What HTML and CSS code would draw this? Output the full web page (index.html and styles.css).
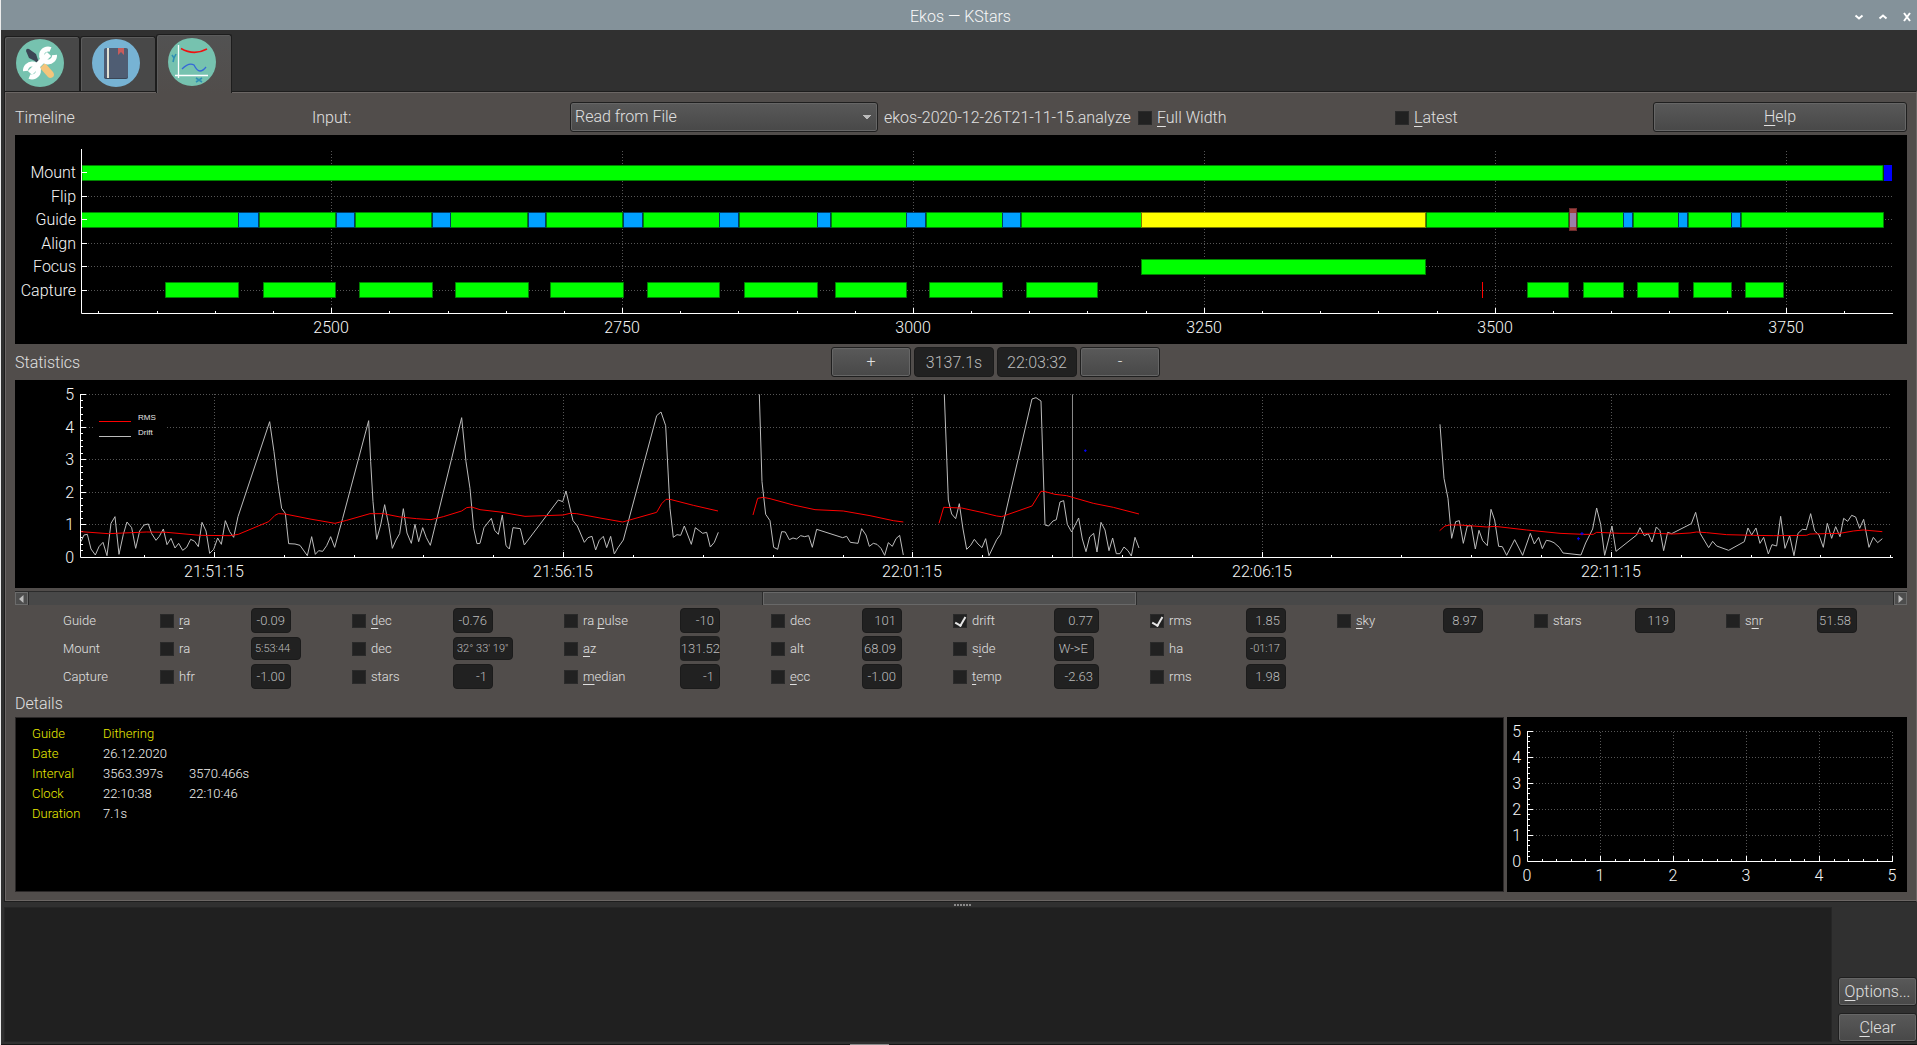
FILE: index.html
```html
<!DOCTYPE html>
<html lang="en">
<head>
<meta charset="utf-8">
<title>Ekos — KStars</title>
<link rel="stylesheet" href="styles.css">
</head>
<body>
<header class="titlebar">
  <h1 class="title">Ekos — KStars</h1>
  <div class="window-buttons">
    <button type="button" aria-label="Minimize"><svg width="12" height="12" viewBox="0 0 12 12"><path d="M2.500 4.500L6 7.500L9.500 4.500"/></svg></button>
    <button type="button" aria-label="Maximize"><svg width="12" height="12" viewBox="0 0 12 12"><path d="M2.500 7.500L6 4.500L9.500 7.500"/></svg></button>
    <button type="button" aria-label="Close"><svg width="12" height="12" viewBox="0 0 12 12"><path d="M3 2L9 10M9 2L3 10"/></svg></button>
  </div>
</header>

<nav class="tabs">
  <button type="button" class="tab" aria-label="Setup">
    <svg width="48" height="48" viewBox="0 0 48 48">
      <circle cx="24" cy="24" r="24" fill="#76c2af"/>
      <path d="M10 12Q10 9 13 10L20 15L22 21L25 24L23 26L19 22L13 19Z" fill="#3b4554"/>
      <path d="M24 29L29 24L37 33Q39 36 37 38Q34 40 32 38Z" fill="#f5c57b"/>
      <path d="M14 34L33 15" stroke="#fff" stroke-width="6"/>
      <path d="M34.500 10.500A6.500 6.500 0 1 0 38.500 16" fill="none" stroke="#fff" stroke-width="5"/>
      <path d="M13.500 37.500A6.500 6.500 0 1 0 9.500 32" fill="none" stroke="#fff" stroke-width="5"/>
    </svg>
  </button>
  <button type="button" class="tab" aria-label="Scheduler">
    <svg width="48" height="48" viewBox="0 0 48 48">
      <circle cx="24" cy="24" r="24" fill="#77b3d4"/>
      <rect x="12" y="10" width="24" height="30" rx="2" fill="#3b4656"/>
      <rect x="12" y="9" width="24" height="30" rx="2" fill="#4f5d73"/>
      <rect x="15" y="9" width="2" height="30" fill="#e0e0d1"/>
      <path d="M26 9H32V16L29 13L26 16Z" fill="#c75c5c"/>
    </svg>
  </button>
  <button type="button" class="tab tab-active" aria-label="Analyze">
    <svg width="48" height="48" viewBox="0 0 48 48">
      <circle cx="24" cy="24" r="24" fill="#76c2af"/>
      <path d="M10.500 7V40M7 37.500H40" stroke="#fff" stroke-width="1.300" fill="none"/>
      <path d="M13 10.500Q26 18 39 11" stroke="#f01010" stroke-width="1.500" fill="none"/>
      <path d="M14 31Q21 24 26 27Q29 33 32 33Q35 33 38 29" stroke="#3568d8" stroke-width="1.300" fill="none"/>
      <path d="M4 17L6 20L8 16M6 20L5 24M28 40L34 44M34 40L28 44" stroke="#2f8fb4" stroke-width="1.600" fill="none"/>
    </svg>
  </button>
</nav>

<main class="panel">
  <div class="controls">
    <h2>Timeline</h2>
    <label for="input">Input:</label>
    <select id="input"><option>Read from File</option></select>
    <span>ekos-2020-12-26T21-11-15.analyze</span>
    <label class="check"><input type="checkbox"><span><u>F</u>ull Width</span></label>
    <label class="check"><input type="checkbox"><span><u>L</u>atest</span></label>
    <button type="button" class="push"><u>H</u>elp</button>
  </div>

  <svg class="chart" viewBox="15 135 1892 209" role="img" aria-label="Timeline">
    <g class="grid">
      <path d="M331.500 151V313M622.500 151V313M913.500 151V313M1204.500 151V313M1495.500 151V313M1786.500 151V313"/>
      <path d="M88 196.500H1892M88 219.500H1892M88 243.500H1892M88 266.500H1892M88 290.500H1892"/>
    </g>
    <g class="done">
      <rect x="82" y="165.500" width="1801" height="15"/>
      <path d="M82 212.500H238.500V227.500H82M259.500 212.500H335.500V227.500H259.500ZM355.500 212.500H431.500V227.500H355.500ZM450.500 212.500H527.500V227.500H450.500ZM546.500 212.500H622.500V227.500H546.500ZM643.500 212.500H719.500V227.500H643.500ZM739.500 212.500H817.500V227.500H739.500ZM831.500 212.500H906.500V227.500H831.500ZM926.500 212.500H1002.500V227.500H926.500ZM1021.500 212.500H1141.500V227.500H1021.500ZM1426.500 212.500H1568.500V227.500H1426.500ZM1577.500 212.500H1623.500V227.500H1577.500ZM1633.500 212.500H1678.500V227.500H1633.500ZM1688.500 212.500H1731.500V227.500H1688.500ZM1741.500 212.500H1883.500V227.500H1741.500Z"/>
      <rect x="1141.500" y="259.500" width="284" height="15"/>
      <path d="M165.500 282.500H238.500V297.500H165.500ZM263.500 282.500H335.500V297.500H263.500ZM359.500 282.500H432.500V297.500H359.500ZM455.500 282.500H528.500V297.500H455.500ZM550.500 282.500H623.500V297.500H550.500ZM647.500 282.500H719.500V297.500H647.500ZM744.500 282.500H817.500V297.500H744.500ZM835.500 282.500H906.500V297.500H835.500ZM929.500 282.500H1002.500V297.500H929.500ZM1026.500 282.500H1097.500V297.500H1026.500ZM1527.500 282.500H1568.500V297.500H1527.500ZM1583.500 282.500H1623.500V297.500H1583.500ZM1637.500 282.500H1678.500V297.500H1637.500ZM1693.500 282.500H1731.500V297.500H1693.500ZM1745.500 282.500H1783.500V297.500H1745.500Z"/>
    </g>
    <path class="dither" d="M238.500 212.500H258.500V227.500H238.500ZM336.500 212.500H354.500V227.500H336.500ZM432.500 212.500H450.500V227.500H432.500ZM528.500 212.500H545.500V227.500H528.500ZM623.500 212.500H642.500V227.500H623.500ZM719.500 212.500H738.500V227.500H719.500ZM817.500 212.500H830.500V227.500H817.500ZM906.500 212.500H925.500V227.500H906.500ZM1002.500 212.500H1020.500V227.500H1002.500ZM1623.500 212.500H1632.500V227.500H1623.500ZM1678.500 212.500H1687.500V227.500H1678.500ZM1731.500 212.500H1740.500V227.500H1731.500Z"/>
    <rect class="suspended" x="1141.500" y="212.500" width="284" height="15"/>
    <rect class="parked" x="1884" y="165" width="8" height="16"/>
    <rect class="selected" x="1569.500" y="208.500" width="7" height="22"/>
    <rect x="1570" y="213" width="6" height="14" fill="#9b7fa8"/>
    <path d="M1482.500 282V298" stroke="#f00"/>
    <path class="axis" d="M81.500 149V313.500H1893M81 172.500H87M81 196.500H87M81 219.500H87M81 243.500H87M81 266.500H87M81 290.500H87M331.500 308V313M622.500 308V313M913.500 308V313M1204.500 308V313M1495.500 308V313M1786.500 308V313M98.500 311V313M157.500 311V313M215.500 311V313M273.500 311V313M389.500 311V313M448.500 311V313M506.500 311V313M564.500 311V313M680.500 311V313M738.500 311V313M797.500 311V313M855.500 311V313M971.500 311V313M1029.500 311V313M1087.500 311V313M1146.500 311V313M1262.500 311V313M1320.500 311V313M1378.500 311V313M1437.500 311V313M1553.500 311V313M1611.500 311V313M1669.500 311V313M1727.500 311V313M1844.500 311V313"/>
    <g class="ylabels">
      <text x="76" y="178">Mount</text><text x="76" y="202">Flip</text><text x="76" y="225">Guide</text><text x="76" y="249">Align</text><text x="76" y="272">Focus</text><text x="76" y="296">Capture</text>
    </g>
    <g class="xlabels">
      <text x="331" y="333">2500</text><text x="622" y="333">2750</text><text x="913" y="333">3000</text><text x="1204" y="333">3250</text><text x="1495" y="333">3500</text><text x="1786" y="333">3750</text>
    </g>
  </svg>

  <div class="stats-bar">
    <h2>Statistics</h2>
    <div class="zoom">
      <button type="button" class="push">+</button>
      <input type="text" aria-label="Elapsed time" value="3137.1s" readonly>
      <input type="text" aria-label="Clock time" value="22:03:32" readonly>
      <button type="button" class="push">-</button>
    </div>
  </div>

  <svg class="chart" viewBox="15 380 1892 208" role="img" aria-label="Statistics">
    <g class="grid">
      <path d="M214.500 394V557M563.500 394V557M912.500 394V557M1262.500 394V557M1611.500 394V557"/>
      <path d="M86 394.500H1891M86 427.500H1891M86 459.500H1891M86 492.500H1891M86 524.500H1891"/>
    </g>
    <path d="M95 415H165V430H95Z" fill="#000"/>
    <path d="M99 421.500H131" stroke="#f00"/>
    <path d="M99 436.500H131" stroke="#bbb"/>
    <text class="legend" x="138" y="420">RMS</text>
    <text class="legend" x="138" y="435">Drift</text>
    <path class="axis" d="M80.500 394V557.500H1893M80 394.500H86M80 427.500H86M80 459.500H86M80 492.500H86M80 524.500H86M80 400.500H83M80 407.500H83M80 414.500H83M80 420.500H83M80 433.500H83M80 440.500H83M80 446.500H83M80 453.500H83M80 466.500H83M80 472.500H83M80 479.500H83M80 485.500H83M80 498.500H83M80 505.500H83M80 511.500H83M80 518.500H83M80 531.500H83M80 537.500H83M80 544.500H83M80 550.500H83M214.500 552V557M563.500 552V557M912.500 552V557M1262.500 552V557M1611.500 552V557M144.500 555V557M284.500 555V557M354.500 555V557M423.500 555V557M493.500 555V557M633.500 555V557M703.500 555V557M773.500 555V557M843.500 555V557M982.500 555V557M1052.500 555V557M1122.500 555V557M1192.500 555V557M1331.500 555V557M1401.500 555V557M1471.500 555V557M1541.500 555V557M1681.500 555V557M1751.500 555V557M1820.500 555V557M1890.500 555V557"/>
    <g transform="translate(0 375) scale(.33333)">
      <g class="drift">
        <polyline points="243,500 252,480 262,478 273,522 286,540 297,515 309,502 321,542 333,445 345,425 357,538 370,478 381,441 395,458 407,520 419,468 432,450 445,447 455,476 468,496 478,484 490,462 501,509 513,490 525,519 536,505 548,526 560,517 572,493 584,499 595,515 606,442 618,468 629,535 641,523 653,489 664,508 676,437 689,470 701,487 714,425 809,140 822,230 833,320 845,400 856,415 866,506 885,507 900,511 922,542 935,485 946,538 956,527 968,529 980,512 992,485 1004,517 1028,430 1106,137 1112,260 1119,380 1130,493 1142,450 1154,389 1166,450 1177,520 1188,495 1199,476 1210,401 1221,474 1234,505 1245,448 1256,500 1268,458 1279,488 1291,511 1385,128 1398,260 1410,340 1421,460 1431,506 1440,505"/>
        <g transform="translate(1440)">
          <polyline points="0,505 12,458 34,430 44,466 55,478 67,420 78,512 88,522 99,458 121,461 133,510 235,375 248,380 258,348 279,437 292,453 313,502 324,488 336,484 347,525 358,496 370,484 380,518 392,484 403,537 414,518 430,495 530,122 543,111 557,152 570,400 580,487 591,479 602,481 613,453 634,508 646,458 668,475 680,472 691,516 703,502 715,472"/>
          <polyline points="838,58 846,320 857,418 870,437 881,517 893,523 905,470 916,471 928,494 939,489 950,492 962,482 974,485 986,482 997,517 1010,463 1088,488 1100,484 1111,502 1134,505 1145,461 1158,480 1168,514 1180,505 1191,508 1203,520 1214,541 1225,503 1237,514 1248,491 1259,481 1270,540"/>
        </g>
        <g transform="translate(2700)">
          <polyline points="133,58 145,375 155,417 167,431 178,386 189,462 200,523 212,511 223,493 234,507 246,518 257,491 267,542 290,494 302,478 396,72 408,68 423,78 435,450 446,453 459,438 469,434 480,381 491,377 502,448 515,471 536,429 547,492 558,530 569,486 581,475 591,531 603,442 615,465 627,527 638,489 649,536 660,536 672,516 684,527 694,543 705,487 717,519"/>
          <path d="M517.500 58V547"/>
        </g>
        <g transform="translate(4260)">
          <polyline points="60,148 72,310 84,370 95,490 107,440 118,437 130,505 142,453 154,452 166,522 177,466 188,497 202,512 213,403 224,435 236,514 247,515 260,541 284,494 308,541 331,475 343,507 356,487 367,521 379,496 390,498 402,503 418,517 429,534 483,540 497,504 518,462 530,399 542,448 554,541 576,453 588,529 650,480 660,458 673,482 685,476 696,501 709,456 720,467 731,527 743,472 755,476 814,446 827,412 841,476 866,518 878,499 890,513 926,526 973,500 984,459 995,480 1008,459 1020,505 1031,487 1045,537 1056,509 1070,513 1082,424 1095,520 1109,482 1122,542 1134,475 1147,463 1159,464 1172,416 1184,468 1197,480 1210,517 1222,445 1235,490 1247,455 1260,485 1271,430 1283,439 1295,421 1307,426 1319,460 1331,433 1347,517 1360,487 1373,503 1387,491"/>
        </g>
      </g>
      <g class="rms">
        <polyline points="243,470 325,476 440,471 500,472 600,481 690,482 715,478 806,440 825,421 835,416 855,417 930,432 1005,445 1040,436 1110,416 1150,416 1200,426 1250,431 1293,434 1330,425 1385,408 1400,398 1415,396 1440,404"/>
        <g transform="translate(1440)">
          <polyline points="0,404 60,411 135,424 250,420 270,415 290,416 360,429 428,441 530,412 545,386 558,373 570,373 640,391 714,408"/>
          <polyline points="819,420 833,370 850,367 870,371 940,390 1005,404 1090,408 1170,422 1240,437 1270,441"/>
        </g>
        <g transform="translate(2700)">
          <polyline points="117,445 131,397 185,399 240,411 290,423 305,425 396,393 423,349 432,349 465,358 500,362 580,385 640,397 717,417"/>
        </g>
        <g transform="translate(4260)">
          <polyline points="59,467 75,453 90,450 120,450 200,456 225,454 320,465 420,475 490,478 520,478 530,472 600,475 700,475 760,477 810,474 830,471 860,473 920,479 1000,481 1060,482 1160,481 1170,477 1260,475 1300,468 1330,465 1387,470"/>
        </g>
      </g>
      <path d="M3252 227H3260M3256 223V231M4741 476H4751M4746 471V481M4731 491H4740M4735 486V496" stroke="#00f" stroke-width="3"/>
    </g>
    <g class="ylabels">
      <text x="74" y="400">5</text><text x="74" y="433">4</text><text x="74" y="465">3</text><text x="74" y="498">2</text><text x="74" y="530">1</text><text x="74" y="563">0</text>
    </g>
    <g class="xlabels">
      <text x="214" y="577">21:51:15</text><text x="563" y="577">21:56:15</text><text x="912" y="577">22:01:15</text><text x="1262" y="577">22:06:15</text><text x="1611" y="577">22:11:15</text>
    </g>
  </svg>

  <div class="scrollbar">
    <button type="button" aria-label="Scroll left"><svg width="5" height="8" viewBox="0 0 5 8"><path d="M4.500 0V8L0 4Z" fill="#bbb"/></svg></button>
    <div class="track"><div class="thumb"></div></div>
    <button type="button" aria-label="Scroll right"><svg width="5" height="8" viewBox="0 0 5 8"><path d="M.5 0V8L5 4Z" fill="#bbb"/></svg></button>
  </div>

  <div class="values">
    <span class="row-name">Guide</span>
    <label class="check"><input type="checkbox"><span><u>r</u>a</span></label><input type="text" aria-label="Guide ra" value="-0.09" readonly>
    <label class="check"><input type="checkbox"><span><u>d</u>ec</span></label><input type="text" aria-label="Guide dec" value="-0.76" readonly>
    <label class="check"><input type="checkbox"><span>ra <u>p</u>ulse</span></label><input type="text" aria-label="Guide ra pulse" value="-10" readonly>
    <label class="check"><input type="checkbox"><span>dec</span></label><input type="text" aria-label="Guide dec pulse" value="101" readonly>
    <label class="check"><input type="checkbox" checked><span>drift</span></label><input type="text" class="w45" aria-label="Guide drift" value="0.77" readonly>
    <label class="check"><input type="checkbox" checked><span>rms</span></label><input type="text" aria-label="Guide rms" value="1.85" readonly>
    <label class="check"><input type="checkbox"><span><u>s</u>ky</span></label><input type="text" aria-label="Guide sky" value="8.97" readonly>
    <label class="check"><input type="checkbox"><span>stars</span></label><input type="text" aria-label="Guide stars" value="119" readonly>
    <label class="check"><input type="checkbox"><span>s<u>n</u>r</span></label><input type="text" aria-label="Guide snr" value="51.58" readonly>

    <span class="row-name">Mount</span>
    <label class="check"><input type="checkbox"><span>ra</span></label><input type="text" class="angle w50" aria-label="Mount ra" value="5:53:44" readonly>
    <label class="check"><input type="checkbox"><span>dec</span></label><input type="text" class="angle w60" aria-label="Mount dec" value="32° 33' 19&quot;" readonly>
    <label class="check"><input type="checkbox"><span><u>a</u>z</span></label><input type="text" class="tight" aria-label="Mount az" value="131.52" readonly>
    <label class="check"><input type="checkbox"><span>alt</span></label><input type="text" aria-label="Mount alt" value="68.09" readonly>
    <label class="check"><input type="checkbox"><span>s<u>i</u>de</span></label><input type="text" aria-label="Mount side" value="W-&gt;E" readonly>
    <label class="check"><input type="checkbox"><span>ha</span></label><input type="text" class="angle" aria-label="Mount ha" value="-01:17" readonly>

    <span class="row-name">Capture</span>
    <label class="check"><input type="checkbox"><span>hfr</span></label><input type="text" aria-label="Capture hfr" value="-1.00" readonly>
    <label class="check"><input type="checkbox"><span>stars</span></label><input type="text" aria-label="Capture stars" value="-1" readonly>
    <label class="check"><input type="checkbox"><span><u>m</u>edian</span></label><input type="text" aria-label="Capture median" value="-1" readonly>
    <label class="check"><input type="checkbox"><span><u>e</u>cc</span></label><input type="text" aria-label="Capture ecc" value="-1.00" readonly>
    <label class="check"><input type="checkbox"><span><u>t</u>emp</span></label><input type="text" class="w45" aria-label="Capture temp" value="-2.63" readonly>
    <label class="check"><input type="checkbox"><span>rms</span></label><input type="text" aria-label="Capture rms" value="1.98" readonly>
  </div>

  <h2 class="details-title">Details</h2>
  <div class="details">
    <div class="details-text">
      <table>
        <tr><th>Guide</th><th colspan="2">Dithering</th></tr>
        <tr><th>Date</th><td>26.12.2020</td><td></td></tr>
        <tr><th>Interval</th><td>3563.397s</td><td>3570.466s</td></tr>
        <tr><th>Clock</th><td>22:10:38</td><td>22:10:46</td></tr>
        <tr><th>Duration</th><td>7.1s</td><td></td></tr>
      </table>
    </div>
    <svg class="mini" viewBox="1507 717 400 175" role="img" aria-label="Details plot">
      <g class="grid">
        <path d="M1600.500 732V861M1673.500 732V861M1746.500 732V861M1819.500 732V861M1892.500 732V861"/>
        <path d="M1533 731.500H1892M1533 757.500H1892M1533 783.500H1892M1533 809.500H1892M1533 835.500H1892"/>
      </g>
      <path class="axis" d="M1527.500 731V861.500H1893M1527 731.500H1533M1527 757.500H1533M1527 783.500H1533M1527 809.500H1533M1527 835.500H1533M1600.500 856V861M1673.500 856V861M1746.500 856V861M1819.500 856V861M1892.500 856V861M1527 736.500H1530M1527 741.500H1530M1527 747.500H1530M1527 752.500H1530M1527 762.500H1530M1527 767.500H1530M1527 773.500H1530M1527 778.500H1530M1527 788.500H1530M1527 793.500H1530M1527 799.500H1530M1527 804.500H1530M1527 814.500H1530M1527 819.500H1530M1527 825.500H1530M1527 830.500H1530M1527 840.500H1530M1527 845.500H1530M1527 851.500H1530M1527 856.500H1530M1542.500 859V861M1556.500 859V861M1571.500 859V861M1585.500 859V861M1615.500 859V861M1629.500 859V861M1644.500 859V861M1658.500 859V861M1688.500 859V861M1702.500 859V861M1717.500 859V861M1731.500 859V861M1761.500 859V861M1775.500 859V861M1790.500 859V861M1804.500 859V861M1834.500 859V861M1848.500 859V861M1863.500 859V861M1877.500 859V861"/>
      <g class="ylabels">
        <text x="1521" y="737">5</text><text x="1521" y="763">4</text><text x="1521" y="789">3</text><text x="1521" y="815">2</text><text x="1521" y="841">1</text><text x="1521" y="867">0</text>
      </g>
      <g class="xlabels">
        <text x="1527" y="881">0</text><text x="1600" y="881">1</text><text x="1673" y="881">2</text><text x="1746" y="881">3</text><text x="1819" y="881">4</text><text x="1892" y="881">5</text>
      </g>
    </svg>
  </div>
</main>

<div class="splitter"></div>

<footer class="log">
  <textarea aria-label="Log" readonly></textarea>
  <div class="log-buttons">
    <button type="button" class="push"><u>O</u>ptions...</button>
    <button type="button" class="push"><u>C</u>lear</button>
  </div>
</footer>
<div class="dock-edge"><div class="dock-grip"></div></div>
</body>
</html>
```
FILE: styles.css
```css
* { box-sizing: border-box; }

html { height: 100%; }

body {
  margin: 0;
  min-height: 100%;
  display: flex;
  flex-direction: column;
  background: #303030;
  border-left: 1px solid #ececec;
  color: #e0e0e0;
  font: 300 16px/20px Roboto, "Liberation Sans", sans-serif;
}

button, input, select, textarea { font: inherit; color: inherit; margin: 0; }
h1, h2 { margin: 0; font: inherit; }
svg { display: block; }
u { text-underline-offset: 3px; text-decoration-thickness: 1px; }

.titlebar {
  display: grid;
  grid-template-columns: 1fr auto 1fr;
  align-items: center;
  height: 30px;
  margin-left: -1px;
  padding: 3px 4px 0 8px;
  background: #84929a;
}
.title { grid-column: 2; color: #f8f8f8; }
.window-buttons { display: flex; gap: 12px; justify-content: flex-end; }
.window-buttons button { padding: 0; border: 0; background: none; }
.window-buttons path { fill: none; stroke: #fff; stroke-width: 2; }

.tabs {
  display: flex;
  align-items: flex-end;
  padding: 4px 0 0 3px;
}
.tab {
  display: flex;
  align-items: flex-start;
  width: 76px;
  height: 55px;
  padding: 2px 0 0 11px;
  border: 1px solid #1d1d1d;
  border-bottom: 0;
  border-radius: 3px 3px 0 0;
  background: #484848;
  box-shadow: inset 1px 1px #5c5c5c;
}
.tab-active {
  position: relative;
  height: 59px;
  margin-bottom: -2px;
  padding-top: 3px;
  background: linear-gradient(#525252, #514d4b);
}

.panel {
  margin-left: 3px;
  padding: 10px 9px 9px 10px;
  background: #514d4b;
  border: 1px solid #1d1d1d;
  border-right-color: #6b6664;
  box-shadow: inset 1px 1px #6b6664, inset 0 -1px #6b6664;
}

.controls {
  display: grid;
  grid-template-columns: 297fr 258fr 314fr 254fr 257fr 258fr 254fr;
  align-items: center;
  height: 33px;
  padding-bottom: 3px;
  white-space: nowrap;
}
.controls select {
  appearance: none;
  height: 30px;
  margin-right: 6px;
  padding: 0 4px;
  border: 1px solid #1f1f1f;
  border-radius: 3px;
  background:
    linear-gradient(to bottom right, #bbb 50%, transparent 51%) right 6px center / 4px 4px no-repeat,
    linear-gradient(to bottom left, #bbb 50%, transparent 51%) right 10px center / 4px 4px no-repeat,
    linear-gradient(#595959, #484848);
  box-shadow: inset 0 0 0 1px #666;
}
.controls > *, .stats-bar > h2 { padding-top: 1px; }
.push {
  height: 30px;
  padding: 0;
  border: 1px solid #1f1f1f;
  border-radius: 3px;
  background: linear-gradient(#595959, #484848);
  box-shadow: inset 0 0 0 1px #666;
}

.check { display: flex; align-items: center; gap: 5px; }
.check input {
  appearance: none;
  flex: none;
  width: 14px;
  height: 14px;
  background: #212121;
  border: 1px solid #2a2a2a;
}
.check input:checked::before {
  content: "";
  display: block;
  width: 5px;
  height: 9px;
  margin-left: 3px;
  border: solid #e6e6e6;
  border-width: 0 2px 2px 0;
  transform: rotate(30deg);
}

.chart { width: 100%; height: auto; background: #000; }
.grid path { stroke: #565656; stroke-dasharray: 1 2; fill: none; }
.axis { stroke: #fff; fill: none; }
.done { fill: #0f0; stroke: #008500; }
.dither { fill: #00a0ff; stroke: #003a66; }
.suspended { fill: #ff0; stroke: #7a7a00; }
.parked { fill: #00f; }
.selected { fill: #a04040; stroke: #6e2c2c; }
.ylabels text { text-anchor: end; fill: #f6f6f6; }
.xlabels text { text-anchor: middle; fill: #f6f6f6; }
.legend { font: 8px "Liberation Sans", sans-serif; fill: #e6e6e6; }
.drift polyline { fill: none; stroke: #bdbdbd; stroke-width: 3; }
.drift path { stroke: #8c8c8c; stroke-width: 3; }
.rms polyline { fill: none; stroke: #f00; stroke-width: 3; }

.stats-bar {
  display: grid;
  grid-template-columns: 1fr auto 1fr;
  align-items: center;
  height: 36px;
}
.zoom { display: flex; gap: 3px; margin-left: 69px; }
.zoom .push, .zoom input { width: 80px; height: 30px; }
input[type="text"] {
  border: 1px solid #1b1b1b;
  border-radius: 4px;
  background: #212121;
  color: #bcbcbc;
}
.zoom input { text-align: center; padding: 0; }

.scrollbar {
  display: flex;
  height: 14px;
  margin-top: 3px;
  border-top: 1px solid #2b2b2b;
  background: #484848;
}
.scrollbar button {
  flex: none;
  display: grid;
  place-items: center;
  width: 13px;
  padding: 0;
  border: 1px solid #6b6b6b;
  background: #4d4d4d;
}
.track { flex: 1; border: solid #2b2b2b; border-width: 0 1px; }
.thumb {
  width: 20%;
  height: 13px;
  margin-left: 39.4%;
  border: 1px solid #686868;
  background: #505050;
  box-shadow: -1px 0 #2b2b2b, 1px 0 #2b2b2b;
}

.values {
  display: grid;
  grid-template-columns:
    97fr 91fr 101fr 101fr 111fr 116fr 91fr 91fr 91fr 101fr 96fr
    96fr 91fr 106fr 91fr 101fr 91fr 91fr 90fr;
  grid-auto-rows: 25px;
  gap: 3px 0;
  align-items: center;
  padding: 3px 0 0 48px;
  font-size: 13px;
  white-space: nowrap;
}
.row-name { grid-column: 1; }
.values input[type="text"] {
  width: 40px;
  height: 25px;
  padding: 0 5px 0 0;
  text-align: right;
}
.values input.w45 { width: 45px; }
.values input.tight { padding: 0; border: 0; }
.values input.angle {
  height: 23px;
  padding: 0 0 0 3px;
  text-align: left;
  font-size: 11px;
}
.values input.w50 { width: 50px; }
.values input.w60 { width: 60px; }

.details-title { padding: 5px 0 3px; }
.details { display: grid; grid-template-columns: 1489fr 400fr; gap: 3px; }
.details-text {
  padding: 6px 16px;
  background: #000;
  border: 1px solid #2a2727;
  font-size: 13px;
}
table { border-collapse: collapse; }
th, td { height: 20px; padding: 0; font-weight: inherit; text-align: left; }
td { color: #f4f4f4; }
th { color: #eaea00; }
th:first-child { width: 71px; }
td:nth-child(2) { width: 86px; }
.mini { width: 100%; background: #000; }

.splitter {
  align-self: center;
  width: 17px;
  height: 2px;
  margin: 2px 0 1px 6px;
  background: repeating-linear-gradient(to right, #888 0 2px, transparent 2px 3px);
}

.log { flex: 1; display: flex; gap: 6px; padding: 0 0 2px 3px; }
.log textarea {
  flex: 1;
  resize: none;
  border: 1px solid #262626;
  background: #202020;
}
.log-buttons {
  display: flex;
  flex-direction: column;
  justify-content: flex-end;
  gap: 7px;
  width: 79px;
}
.log-buttons .push { height: 29px; padding-top: 1px; }

.dock-edge { height: 1px; background: #161616; }
.dock-grip { width: 39px; height: 1px; margin-left: 44.3%; background: #8a8a8a; }
```
